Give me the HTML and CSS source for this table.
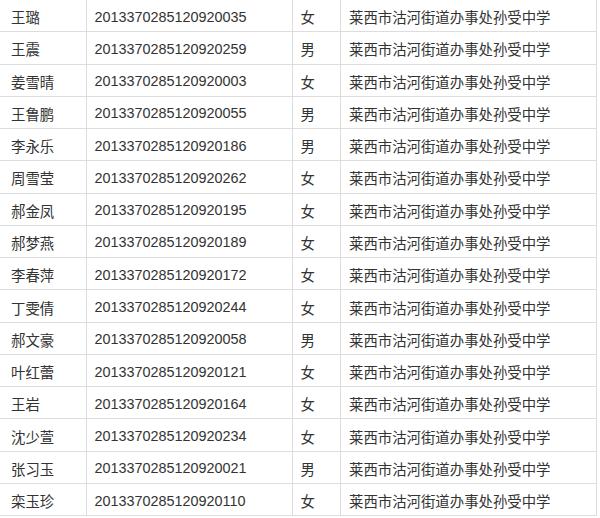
FILE: index.html
```html
<!DOCTYPE html>
<html lang="zh-CN">
<head>
<meta charset="utf-8">
<title>名单</title>
<link rel="stylesheet" href="styles.css">
</head>
<body>
<table class="roster">
  <colgroup>
    <col class="c-name"><col class="c-id"><col class="c-sex"><col class="c-school">
  </colgroup>
  <tbody>
    <tr><td>王璐</td><td>2013370285120920035</td><td>女</td><td>莱西市沽河街道办事处孙受中学</td></tr>
    <tr><td>王震</td><td>2013370285120920259</td><td>男</td><td>莱西市沽河街道办事处孙受中学</td></tr>
    <tr><td>姜雪晴</td><td>2013370285120920003</td><td>女</td><td>莱西市沽河街道办事处孙受中学</td></tr>
    <tr><td>王鲁鹏</td><td>2013370285120920055</td><td>男</td><td>莱西市沽河街道办事处孙受中学</td></tr>
    <tr><td>李永乐</td><td>2013370285120920186</td><td>男</td><td>莱西市沽河街道办事处孙受中学</td></tr>
    <tr><td>周雪莹</td><td>2013370285120920262</td><td>女</td><td>莱西市沽河街道办事处孙受中学</td></tr>
    <tr><td>郝金凤</td><td>2013370285120920195</td><td>女</td><td>莱西市沽河街道办事处孙受中学</td></tr>
    <tr><td>郝梦燕</td><td>2013370285120920189</td><td>女</td><td>莱西市沽河街道办事处孙受中学</td></tr>
    <tr><td>李春萍</td><td>2013370285120920172</td><td>女</td><td>莱西市沽河街道办事处孙受中学</td></tr>
    <tr><td>丁雯倩</td><td>2013370285120920244</td><td>女</td><td>莱西市沽河街道办事处孙受中学</td></tr>
    <tr><td>郝文豪</td><td>2013370285120920058</td><td>男</td><td>莱西市沽河街道办事处孙受中学</td></tr>
    <tr><td>叶红蕾</td><td>2013370285120920121</td><td>女</td><td>莱西市沽河街道办事处孙受中学</td></tr>
    <tr><td>王岩</td><td>2013370285120920164</td><td>女</td><td>莱西市沽河街道办事处孙受中学</td></tr>
    <tr><td>沈少萱</td><td>2013370285120920234</td><td>女</td><td>莱西市沽河街道办事处孙受中学</td></tr>
    <tr><td>张习玉</td><td>2013370285120920021</td><td>男</td><td>莱西市沽河街道办事处孙受中学</td></tr>
    <tr><td>栾玉珍</td><td>2013370285120920110</td><td>女</td><td>莱西市沽河街道办事处孙受中学</td></tr>
  </tbody>
</table>
</body>
</html>
```

FILE: styles.css
```css
html, body {
  margin: 0;
  padding: 0;
  background: #ffffff;
}

.roster {
  border-collapse: collapse;
  table-layout: fixed;
  width: 596px;
  margin-top: -1px;
  font-family: "Liberation Sans", "Noto Sans CJK SC", sans-serif;
  font-size: 14.4px;
  color: #333333;
}

.c-name { width: 85.5px; }
.c-id { width: 206px; }
.c-sex { width: 48.5px; }
.c-school { width: 256px; }

.roster tr {
  height: 32.27px;
}

.roster td {
  border: 1px solid #dddddd;
  padding: 2px 8px 0 8px;
  white-space: nowrap;
  overflow: hidden;
  vertical-align: middle;
}

.roster td:first-child {
  border-left-color: transparent;
  padding-left: 10px;
}
```
